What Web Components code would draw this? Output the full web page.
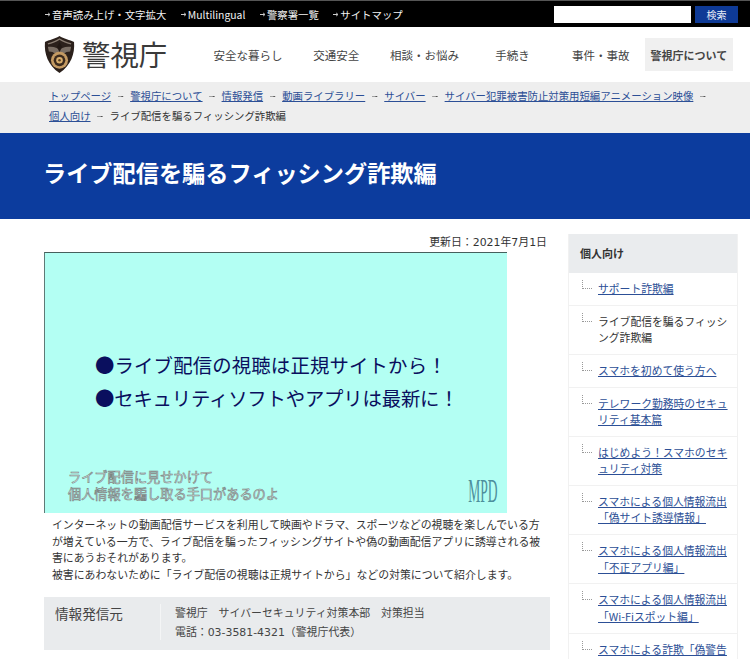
<!DOCTYPE html>
<html lang="ja">
<head>
<meta charset="utf-8">
<title>ライブ配信を騙るフィッシング詐欺編</title>
<style>
    html, body { margin: 0; height: 659px; overflow: hidden; background: #fff; }
    body { font-family: "Noto Sans CJK JP", "Noto Sans", sans-serif; color: #333; }
</style>
</head>
<body>
<top-bar></top-bar>
<site-header></site-header>
<bread-crumbs></bread-crumbs>
<page-title>ライブ配信を騙るフィッシング詐欺編</page-title>
<page-body>
    <main-article></main-article>
    <side-nav slot="side"></side-nav>
</page-body>

<script>
const topBarTemplate = document.createElement('template');
topBarTemplate.innerHTML = `
    <style>
        :host { display: flex; align-items: center; height: 26px; padding-left: 45px; padding-right: 12px; background: #000; border-top: 1px solid #555; font-size: 10.4px; color: #f2f2f2; }
        .links { display: flex; flex: 1; gap: 14.5px; }
        a { color: inherit; text-decoration: none; display: flex; align-items: center; gap: 1px; }
        svg { width: 6px; height: 5px; }
        .search { display: flex; gap: 4px; }
        .search__input { width: 137px; height: 17px; background: #fff; }
        .search__btn { width: 43px; height: 17px; background: #0e3a96; color: #e8ecf6; font-size: 10px; text-align: center; line-height: 17px; }
    </style>
    <div class="links">
        <a href="#"><svg viewBox="0 0 6 5"><path d="M0 2.5h4.5M3.2 1l1.8 1.5L3.2 4" fill="none" stroke="#ccc" stroke-width="1"/></svg>音声読み上げ・文字拡大</a>
        <a href="#"><svg viewBox="0 0 6 5"><path d="M0 2.5h4.5M3.2 1l1.8 1.5L3.2 4" fill="none" stroke="#ccc" stroke-width="1"/></svg>Multilingual</a>
        <a href="#"><svg viewBox="0 0 6 5"><path d="M0 2.5h4.5M3.2 1l1.8 1.5L3.2 4" fill="none" stroke="#ccc" stroke-width="1"/></svg>警察署一覧</a>
        <a href="#"><svg viewBox="0 0 6 5"><path d="M0 2.5h4.5M3.2 1l1.8 1.5L3.2 4" fill="none" stroke="#ccc" stroke-width="1"/></svg>サイトマップ</a>
    </div>
    <div class="search">
        <div class="search__input"></div>
        <div class="search__btn">検索</div>
    </div>
`;

class TopBar extends HTMLElement {
    constructor() {
        super();
        this.attachShadow({ mode: 'open' });
        this.shadowRoot.appendChild(topBarTemplate.content.cloneNode(true));
    }
}
customElements.define('top-bar', TopBar);

const siteHeaderTemplate = document.createElement('template');
siteHeaderTemplate.innerHTML = `
    <style>
        :host { display: flex; align-items: center; height: 55px; padding: 0 17px 0 44px; background: #fff; }
        .logo { display: flex; align-items: center; gap: 7px; width: 160px; font-size: 28.4px; line-height: 1; color: #3a3a3a; }
        .logo svg { width: 31px; height: 39px; flex: none; }
        nav { display: grid; grid-template-columns: repeat(6, 1fr); flex: 1; font-size: 11.5px; color: #444; }
        nav a { display: flex; align-items: center; justify-content: center; height: 33px; color: inherit; text-decoration: none; white-space: nowrap; }
        nav a.is-active { background: #f0f0f0; font-weight: 700; font-size: 11px; }
    </style>
    <div class="logo">
        <svg viewBox="0 0 32 40">
            <path d="M16 1C12 4 5 5 1 7c-1 12 3 24 15 32C28 31 32 19 31 7 27 5 20 4 16 1z" fill="#2b201b"/>
            <path d="M4 9c4-1 8-2 12-5 4 3 8 4 12 5" fill="none" stroke="#8a7d72" stroke-width="1.2"/>
            <path d="M4 12c4 0 8 0 12 3 4-3 8-3 12-3l-1 5c-3 0-5 1-6 2H11c-1-1-3-2-6-2z" fill="#7a6e64"/>
            <path d="M16 7l2.5 5-2.5 6-2.5-6z" fill="#221814"/>
            <circle cx="16" cy="26" r="8.8" fill="#c49a62"/>
            <circle cx="16" cy="26" r="6" fill="#3b2a1d"/>
            <circle cx="16" cy="26" r="3.4" fill="#d8ad6c"/>
            <circle cx="16" cy="26" r="1.3" fill="#5a4022"/>
        </svg>
        <span>警視庁</span>
    </div>
    <nav>
        <a href="#">安全な暮らし</a>
        <a href="#">交通安全</a>
        <a href="#">相談・お悩み</a>
        <a href="#">手続き</a>
        <a href="#">事件・事故</a>
        <a href="#" class="is-active">警視庁について</a>
    </nav>
`;

class SiteHeader extends HTMLElement {
    constructor() {
        super();
        this.attachShadow({ mode: 'open' });
        this.shadowRoot.appendChild(siteHeaderTemplate.content.cloneNode(true));
    }
}
customElements.define('site-header', SiteHeader);

const breadCrumbsTemplate = document.createElement('template');
breadCrumbsTemplate.innerHTML = `
    <style>
        :host { display: block; height: 40px; padding: 4px 20px 7px 49px; background: #eee; font-size: 10.4px; line-height: 20px; color: #333; }
        ol { display: flex; flex-wrap: wrap; margin: 0; padding: 0; list-style: none; }
        li { display: flex; align-items: center; white-space: nowrap; }
        li:not(:last-child)::after { content: ""; display: block; width: 6px; height: 5px; margin: 0 6.5px; background: linear-gradient(#555, #555) center / 100% 1px no-repeat; clip-path: polygon(0 40%, 62% 40%, 62% 0, 100% 50%, 62% 100%, 62% 60%, 0 60%); }
        a { color: #2c4f96; }
    </style>
    <ol>
        <li><a href="#">トップページ</a></li>
        <li><a href="#">警視庁について</a></li>
        <li><a href="#">情報発信</a></li>
        <li><a href="#">動画ライブラリー</a></li>
        <li><a href="#">サイバー</a></li>
        <li><a href="#">サイバー犯罪被害防止対策用短編アニメーション映像</a></li>
        <li><a href="#">個人向け</a></li>
        <li>ライブ配信を騙るフィッシング詐欺編</li>
    </ol>
`;

class BreadCrumbs extends HTMLElement {
    constructor() {
        super();
        this.attachShadow({ mode: 'open' });
        this.shadowRoot.appendChild(breadCrumbsTemplate.content.cloneNode(true));
    }
}
customElements.define('bread-crumbs', BreadCrumbs);

const pageTitleTemplate = document.createElement('template');
pageTitleTemplate.innerHTML = `
    <style>
        :host { display: flex; align-items: center; height: 86px; padding: 0 0 8px 43px; background: #0c3c9e; color: #fff; font-size: 23.2px; font-weight: 700; box-sizing: border-box; }
        h1 { margin: 0; font: inherit; }
    </style>
    <h1><slot></slot></h1>
`;

class PageTitle extends HTMLElement {
    constructor() {
        super();
        this.attachShadow({ mode: 'open' });
        this.shadowRoot.appendChild(pageTitleTemplate.content.cloneNode(true));
    }
}
customElements.define('page-title', PageTitle);

const pageBodyTemplate = document.createElement('template');
pageBodyTemplate.innerHTML = `
    <style>
        :host { display: grid; grid-template-columns: 506px 170px; column-gap: 18px; padding: 15px 12px 0 44px; align-items: start; }
    </style>
    <slot></slot>
    <slot name="side"></slot>
`;

class PageBody extends HTMLElement {
    constructor() {
        super();
        this.attachShadow({ mode: 'open' });
        this.shadowRoot.appendChild(pageBodyTemplate.content.cloneNode(true));
    }
}
customElements.define('page-body', PageBody);

const videoStillTemplate = document.createElement('template');
videoStillTemplate.innerHTML = `
    <style>
        :host { display: flex; flex-direction: column; justify-content: center; position: relative; width: 463px; height: 261px; padding: 0 0 4px 50px; box-sizing: border-box; background: #b3fff3; border-top: 1px solid #46605c; border-left: 1px solid #5f7a76; color: #0a0f5e; font-size: 19.4px; line-height: 33px; white-space: nowrap; }
        .line-a { letter-spacing: .15px; }
        .line-b { letter-spacing: -.2px; }
        .caption { position: absolute; left: 23px; bottom: 11px; font-size: 13.2px; line-height: 17px; color: #dfeeec; -webkit-text-stroke: .6px #7b8483; }
        .mark { position: absolute; right: 9px; bottom: 5px; font-family: "Liberation Serif", serif; font-size: 33px; line-height: 33px; color: #4d8f9c; transform: scaleX(.41); transform-origin: right bottom; }
    </style>
    <div class="line-a">●ライブ配信の視聴は正規サイトから！</div>
    <div class="line-b">●セキュリティソフトやアプリは最新に！</div>
    <div class="caption">ライブ配信に見せかけて<br>個人情報を騙し取る手口があるのよ</div>
    <div class="mark">MPD</div>
`;

class VideoStill extends HTMLElement {
    constructor() {
        super();
        this.attachShadow({ mode: 'open' });
        this.shadowRoot.appendChild(videoStillTemplate.content.cloneNode(true));
    }
}
customElements.define('video-still', VideoStill);

const infoBoxTemplate = document.createElement('template');
infoBoxTemplate.innerHTML = `
    <style>
        :host { display: flex; height: 53px; padding: 7px 0 10px 11px; margin-top: 14px; box-sizing: border-box; background: #e9ebed; }
        .label { width: 105px; font-size: 13.6px; line-height: 20px; margin-top: -1px; color: #444; }
        .detail { padding-left: 14px; border-left: 1px solid #f4f5f6; font-family: "DejaVu Sans", "Noto Sans CJK JP", sans-serif; font-size: 10.9px; line-height: 19px; color: #444; }
    </style>
    <div class="label">情報発信元</div>
    <div class="detail">警視庁　サイバーセキュリティ対策本部　対策担当<br>電話：03-3581-4321（警視庁代表）</div>
`;

class InfoBox extends HTMLElement {
    constructor() {
        super();
        this.attachShadow({ mode: 'open' });
        this.shadowRoot.appendChild(infoBoxTemplate.content.cloneNode(true));
    }
}
customElements.define('info-box', InfoBox);

const mainArticleTemplate = document.createElement('template');
mainArticleTemplate.innerHTML = `
    <style>
        :host { display: block; font-size: 10.88px; color: #333; }
        .updated { height: 18px; padding-right: 3px; text-align: right; line-height: 18px; font-family: "DejaVu Sans", "Noto Sans CJK JP", sans-serif; font-size: 10.9px; }
        p { margin: 3px 0 0; padding: 0 6px 0 8px; line-height: 16.7px; }
    </style>
    <div class="updated">更新日：2021年7月1日</div>
    <video-still></video-still>
    <p>インターネットの動画配信サービスを利用して映画やドラマ、スポーツなどの視聴を楽しんでいる方が増えている一方で、ライブ配信を騙ったフィッシングサイトや偽の動画配信アプリに誘導される被害にあうおそれがあります。<br>被害にあわないために「ライブ配信の視聴は正規サイトから」などの対策について紹介します。</p>
    <info-box></info-box>
`;

class MainArticle extends HTMLElement {
    constructor() {
        super();
        this.attachShadow({ mode: 'open' });
        this.shadowRoot.appendChild(mainArticleTemplate.content.cloneNode(true));
    }
}
customElements.define('main-article', MainArticle);

const sideNavTemplate = document.createElement('template');
sideNavTemplate.innerHTML = `
    <style>
        :host { display: block; font-size: 10.8px; color: #333; border: 1px solid #f1f1f1; border-top: 0; box-sizing: border-box; }
        h2 { margin: 0; height: 39px; padding-left: 11px; background: #eaecee; font-size: 11px; font-weight: 700; line-height: 39px; color: #333; }
        ul { margin: 0; padding: 0; list-style: none; }
        li { position: relative; padding: 7px 7px 8.2px 29px; border-bottom: 1px solid #f1f1f1; line-height: 16.5px; }
        li::before { content: ""; position: absolute; left: 13px; top: 7px; width: 9px; height: 8px; border-left: 1px dotted #999; border-bottom: 1px dotted #999; }
        a { color: #2c4f96; }
    </style>
    <h2>個人向け</h2>
    <ul>
        <li><a href="#">サポート詐欺編</a></li>
        <li>ライブ配信を騙るフィッシング詐欺編</li>
        <li><a href="#">スマホを初めて使う方へ</a></li>
        <li><a href="#">テレワーク勤務時のセキュリティ基本篇</a></li>
        <li><a href="#">はじめよう！スマホのセキュリティ対策</a></li>
        <li><a href="#">スマホによる個人情報流出「偽サイト誘導情報」</a></li>
        <li><a href="#">スマホによる個人情報流出「不正アプリ編」</a></li>
        <li><a href="#">スマホによる個人情報流出「Wi-Fiスポット編」</a></li>
        <li><a href="#">スマホによる詐欺「偽警告編」</a></li>
    </ul>
`;

class SideNav extends HTMLElement {
    constructor() {
        super();
        this.attachShadow({ mode: 'open' });
        this.shadowRoot.appendChild(sideNavTemplate.content.cloneNode(true));
    }
}
customElements.define('side-nav', SideNav);
</script>
</body>
</html>
